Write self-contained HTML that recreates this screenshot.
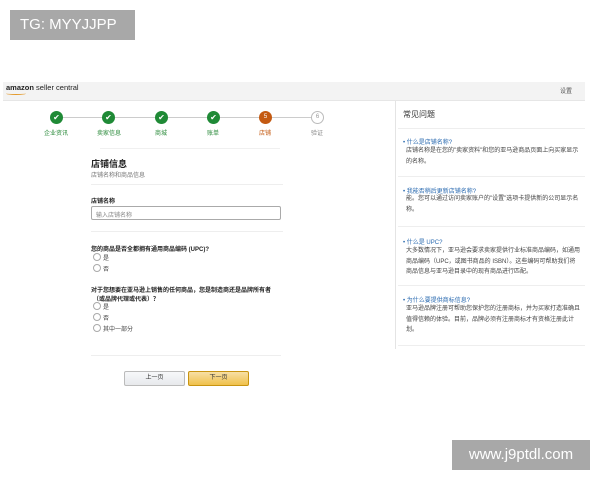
<!DOCTYPE html>
<html><head><meta charset="utf-8"><style>
*{margin:0;padding:0;box-sizing:border-box}
body{width:600px;height:480px;background:#fff;position:relative;overflow:hidden;font-family:"Liberation Sans","Noto Sans CJK SC",sans-serif;color:#333}
.a{position:absolute;white-space:nowrap}
.tg{left:10px;top:10px;width:125px;height:30px;background:#a8a8a8;color:#fff;font-size:15px;line-height:30px;padding-left:10px}
.wm{left:452px;top:440px;width:138px;height:30px;background:#a8a8a8;color:#fff;font-size:15px;line-height:30px;text-align:center}
.hdr{left:3px;top:82px;width:582px;height:19px;background:#f3f3f3;border-bottom:1px solid #e6e6e6}
.c{width:13px;height:13px;border-radius:50%;background:#1f8a36;color:#fff;font-size:8px;line-height:13px;text-align:center}
.lab{font-size:6px;color:#2a8a3a;text-align:center;width:40px}
.line{height:1px;background:#ccc}
.s{font-size:6px;color:#444}
.r{width:8px;height:8px;border:1px solid #aaa;border-radius:50%}
.faq{font-size:6px;color:#444;line-height:10.5px;width:175px;white-space:normal}
.lk{font-size:6px;color:#2a6ab0}
</style></head><body>
<div class="a tg">TG: MYYJJPP</div>
<div class="a hdr"></div>
<div class="a" style="left:6px;top:83px;font-size:7.5px;color:#222"><b>amazon</b> seller central</div>
<div class="a" style="left:6px;top:92px;width:20px;height:3px;border-bottom:1px solid #e39a2c;border-radius:0 0 50% 50%"></div>
<div class="a" style="left:560px;top:86px;font-size:6px;color:#555">设置</div>

<div class="a line" style="left:56px;top:117px;width:261px;background:#ccc"></div>
<div class="a c" style="left:50px;top:111px">✔</div>
<div class="a c" style="left:102px;top:111px">✔</div>
<div class="a c" style="left:155px;top:111px">✔</div>
<div class="a c" style="left:207px;top:111px">✔</div>
<div class="a c" style="left:259px;top:111px;background:#c45a12;font-size:6px">5</div>
<div class="a c" style="left:311px;top:111px;background:#fff;border:1px solid #bbb;color:#999;font-size:6px;line-height:11px">6</div>
<div class="a lab" style="left:36px;top:128px">企业资讯</div>
<div class="a lab" style="left:89px;top:128px">卖家信息</div>
<div class="a lab" style="left:141px;top:128px">商城</div>
<div class="a lab" style="left:193px;top:128px">账单</div>
<div class="a lab" style="left:245px;top:128px;color:#c45a12">店铺</div>
<div class="a lab" style="left:297px;top:128px;color:#888">验证</div>

<div class="a line" style="left:100px;top:148px;width:180px;background:#f0f0f0"></div>
<div class="a" style="left:91px;top:157px;font-size:9px;font-weight:bold;color:#222">店铺信息</div>
<div class="a s" style="left:91px;top:170px;color:#777">店铺名称和商品信息</div>
<div class="a line" style="left:91px;top:184px;width:192px;background:#eee"></div>
<div class="a s" style="left:91px;top:196px;font-weight:bold;color:#222">店铺名称</div>
<div class="a" style="left:91px;top:206px;width:190px;height:14px;border:1px solid #aaa;border-radius:2px;font-size:6px;color:#888;padding:3px 4px">输入店铺名称</div>
<div class="a line" style="left:91px;top:231px;width:192px;background:#eee"></div>
<div class="a s" style="left:91px;top:244px;font-weight:bold;color:#222">您的商品是否全都拥有通用商品编码 (UPC)?</div>
<div class="a r" style="left:93px;top:253px"></div><div class="a s" style="left:103px;top:253px">是</div>
<div class="a r" style="left:93px;top:264px"></div><div class="a s" style="left:103px;top:264px">否</div>
<div class="a s" style="left:91px;top:285px;font-weight:bold;color:#222">对于您想要在亚马逊上销售的任何商品，您是制造商还是品牌所有者</div>
<div class="a s" style="left:93px;top:294px;font-weight:bold;color:#222">（或品牌代理或代表）？</div>
<div class="a r" style="left:93px;top:302px"></div><div class="a s" style="left:103px;top:302px">是</div>
<div class="a r" style="left:93px;top:313px"></div><div class="a s" style="left:103px;top:313px">否</div>
<div class="a r" style="left:93px;top:324px"></div><div class="a s" style="left:103px;top:324px">其中一部分</div>
<div class="a line" style="left:91px;top:355px;width:190px;background:#eee"></div>
<div class="a" style="left:124px;top:371px;width:61px;height:15px;border:1px solid #bbb;border-radius:2px;background:linear-gradient(#f7f8fa,#e7e9ec);font-size:6px;text-align:center;line-height:13px">上一页</div>
<div class="a" style="left:188px;top:371px;width:61px;height:15px;border:1px solid #c89411;border-radius:2px;background:linear-gradient(#f7dfa5,#f0c14b);font-size:6px;text-align:center;line-height:13px">下一页</div>

<div class="a" style="left:395px;top:101px;width:1px;height:248px;background:#e4e4e4"></div>
<div class="a" style="left:403px;top:109px;font-size:8px;color:#333">常见问题</div>
<div class="a line" style="left:398px;top:128px;width:187px;background:#eee"></div>
<div class="a lk" style="left:403px;top:137px">• 什么是店铺名称?</div>
<div class="a faq" style="left:406px;top:146px">店铺名称是在您的"卖家资料"和您的亚马逊商品页面上向买家显示的名称。</div>
<div class="a line" style="left:398px;top:176px;width:187px;background:#eee"></div>
<div class="a lk" style="left:403px;top:186px">• 我能否稍后更新店铺名称?</div>
<div class="a faq" style="left:406px;top:194px">能。您可以通过访问卖家账户的"设置"选项卡提供新的公司显示名称。</div>
<div class="a line" style="left:398px;top:226px;width:187px;background:#eee"></div>
<div class="a lk" style="left:403px;top:237px">• 什么是 UPC?</div>
<div class="a faq" style="left:406px;top:246px">大多数情况下，亚马逊会要求卖家提供行业标准商品编码，如通用商品编码（UPC，或图书商品的 ISBN）。这些编码可帮助我们将商品信息与亚马逊目录中的现有商品进行匹配。</div>
<div class="a line" style="left:398px;top:285px;width:187px;background:#eee"></div>
<div class="a lk" style="left:403px;top:295px">• 为什么要提供商标信息?</div>
<div class="a faq" style="left:406px;top:304px">亚马逊品牌注册可帮助您保护您的注册商标，并为买家打造准确且值得信赖的体验。目前，品牌必须有注册商标才有资格注册此计划。</div>
<div class="a line" style="left:398px;top:345px;width:187px;background:#eee"></div>
<div class="a wm">www.j9ptdl.com</div>
</body></html>
